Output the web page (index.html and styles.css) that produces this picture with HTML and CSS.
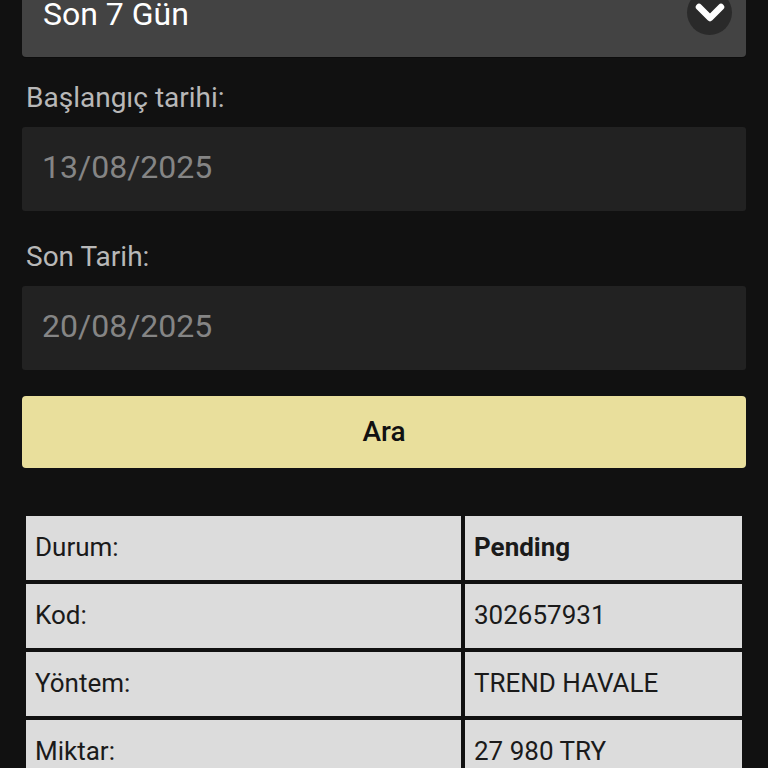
FILE: index.html
```html
<!DOCTYPE html>
<html lang="tr">
<head>
<meta charset="utf-8">
<title>Geçmiş</title>
<link rel="stylesheet" href="styles.css">
</head>
<body>
<div class="page">
  <div class="select">
    <span class="select-text">Son 7 Gün</span>
    <span class="select-arrow">
      <svg width="30" height="20" viewBox="0 0 30 20"><polyline points="4,4 15,15 26,4" fill="none" stroke="#ffffff" stroke-width="6.5" stroke-linecap="round" stroke-linejoin="round"/></svg>
    </span>
  </div>
  <div class="label label-first">Başlangıç tarihi:</div>
  <div class="input">13/08/2025</div>
  <div class="label">Son Tarih:</div>
  <div class="input">20/08/2025</div>
  <button class="btn">Ara</button>
  <table class="info">
    <tr><td class="key">Durum:</td><td class="val strong">Pending</td></tr>
    <tr><td class="key">Kod:</td><td class="val">302657931</td></tr>
    <tr><td class="key">Yöntem:</td><td class="val">TREND HAVALE</td></tr>
    <tr><td class="key">Miktar:</td><td class="val">27 980 TRY</td></tr>
  </table>
</div>
</body>
</html>
```
FILE: styles.css
```css
* { box-sizing: border-box; }
html, body { margin: 0; padding: 0; background: #111111; }
body { font-family: Roboto, "Liberation Sans", sans-serif; overflow: hidden; height: 768px; }
.page { padding: 0 22px; }
.select {
  margin-top: -27px;
  height: 84px;
  background: #434343;
  border-radius: 4px;
  display: flex;
  align-items: center;
  justify-content: space-between;
  padding: 0 14px 2px 21px;
  box-shadow: 0 1px 0 #0c0c0c;
}
.select-text { color: #ffffff; font-size: 32px; line-height: 38px; }
.select-arrow {
  width: 45px; height: 45px; border-radius: 50%;
  background: #2a2a2a;
  display: flex; align-items: center; justify-content: center;
  margin-bottom: 4px;
}
.select-arrow svg { display: block; margin-top: 2px; }
.label {
  color: #b8b8b8; font-size: 28px; line-height: 33px;
  padding: 29px 4px 13px;
}
.label-first { padding-top: 24px; }
.input {
  height: 84px; background: #222222; border-radius: 3px;
  color: #858585; font-size: 32px; line-height: 80px;
  padding: 0 20px 4px;
}
.btn {
  display: block; width: 100%; height: 72px; margin-top: 26px;
  background: #e9df9c; border: none; border-radius: 4px;
  font-family: Roboto, "Liberation Sans", sans-serif;
  font-size: 28px; font-weight: 500; color: #111111;
  padding: 0 0 2px;
}
.info {
  margin-top: 44px; width: 100%;
  border-collapse: separate; border-spacing: 4px;
  table-layout: fixed;
}
.info td {
  height: 64px; background: #dcdcdc; color: #1a1a1a;
  font-size: 26px; padding: 0 8px 2px 9px; vertical-align: middle;
}
.info td.key { width: 435px; }
.info td.val { width: 277px; }
.info td.strong { font-weight: 700; }
```
